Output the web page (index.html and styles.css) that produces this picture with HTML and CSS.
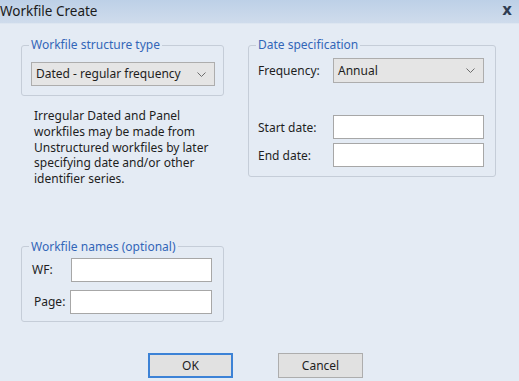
FILE: index.html
```html
<!DOCTYPE html>
<html lang="en">
<head>
    <meta charset="UTF-8">
    <title>Workfile Create</title>
    <link rel="stylesheet" href="styles.css">
</head>
<body>
    <div class="titlebar">
        <span class="title">Workfile Create</span>
        <span class="close">x</span>
    </div>

    <div class="dialog">
        <div class="columns">
            <div class="col-left">
                <fieldset class="group group-structure">
                    <legend>Workfile structure type</legend>
                    <div class="select select-structure">
                        <span>Dated - regular frequency</span>
                        <svg class="chev" width="9" height="5" viewBox="0 0 9 5"><path d="M0.5 0.5 L4.5 4.5 L8.5 0.5" fill="none" stroke="#6d6d6d" stroke-width="1"/></svg>
                    </div>
                </fieldset>

                <p class="note">Irregular Dated and Panel workfiles may be made from Unstructured workfiles by later specifying date and/or other identifier series.</p>

                <fieldset class="group group-names">
                    <legend>Workfile names (optional)</legend>
                    <div class="row row-wf">
                        <label>WF:</label>
                        <input type="text" class="field field-wf">
                    </div>
                    <div class="row row-page">
                        <label>Page:</label>
                        <input type="text" class="field field-page">
                    </div>
                </fieldset>
            </div>

            <div class="col-right">
                <fieldset class="group group-date">
                    <legend>Date specification</legend>
                    <div class="row row-freq">
                        <label>Frequency:</label>
                        <div class="select select-freq">
                            <span>Annual</span>
                            <svg class="chev" width="9" height="5" viewBox="0 0 9 5"><path d="M0.5 0.5 L4.5 4.5 L8.5 0.5" fill="none" stroke="#6d6d6d" stroke-width="1"/></svg>
                        </div>
                    </div>
                    <div class="row row-start">
                        <label>Start date:</label>
                        <input type="text" class="field field-date">
                    </div>
                    <div class="row row-end">
                        <label>End date:</label>
                        <input type="text" class="field field-date">
                    </div>
                </fieldset>
            </div>
        </div>

        <div class="buttons">
            <button class="btn btn-default">OK</button>
            <button class="btn">Cancel</button>
        </div>
    </div>
</body>
</html>
```

FILE: styles.css
```css
* {
    margin: 0;
    padding: 0;
    box-sizing: border-box;
}

body {
    font-family: 'Noto Sans', 'Open Sans', sans-serif;
    font-size: 12px;
    color: #1e1e1e;
    background: #e4ebf4;
    width: 519px;
    height: 381px;
    overflow: hidden;
}

/* Window title */
.titlebar {
    height: 24px;
    display: flex;
    align-items: center;
    justify-content: space-between;
    background: linear-gradient(180deg, #bdd0e7 0%, #cfdcec 100%);
    border-bottom: 1px solid #dde6f1;
    padding-right: 7px;
}

.title {
    font-size: 13.5px;
    color: #1b1b1b;
    margin-top: -2px;
}

.close {
    font-family: 'DejaVu Sans', sans-serif;
    font-weight: 700;
    font-size: 15px;
    color: #2f3d52;
    margin-top: -4px;
}

.dialog {
    padding: 13px 0 0 21px;
}

.columns {
    display: flex;
    gap: 24px;
}

.col-left {
    width: 203px;
}

.col-right {
    width: 248px;
}

/* Group boxes */
.group {
    border: 1px solid #c5cdd8;
    border-radius: 3px;
    padding: 0;
}

.group legend {
    margin-left: 7px;
    padding: 0 2px;
    color: #3366b8;
    line-height: 16px;
}

.group-structure {
    padding: 9px 0;
}

.select {
    height: 24px;
    background: #e5e5e5;
    border: 1px solid #adadad;
    display: flex;
    align-items: center;
    justify-content: space-between;
    padding: 0 8px 0 4px;
}

.select span {
    margin-top: -1px;
}

.select-structure {
    width: 184px;
    margin-left: 9px;
}

.chev {
    display: block;
}

.note {
    margin-top: 12px;
    padding-left: 13px;
    line-height: 15.8px;
    width: 200px;
}

.group-names {
    margin-top: 52px;
    padding: 3px 0 7px 0;
}

.row {
    display: flex;
    align-items: center;
}

.field {
    height: 24px;
    border: 1px solid #a7a7a7;
    background: #fff;
    font: inherit;
}

.row-wf {
    padding-left: 10px;
}

.row-wf label {
    width: 39px;
}

.field-wf {
    width: 141px;
}

.row-page {
    margin-top: 8px;
    padding-left: 12px;
}

.row-page label {
    width: 36px;
}

.field-page {
    width: 142px;
}

.group-date {
    padding: 5px 0 9px 0;
}

.group-date .row {
    padding-left: 9px;
}

.group-date label {
    width: 75px;
}

.select-freq {
    width: 151px;
    height: 25px;
}

.row-start {
    margin-top: 32px;
}

.row-end {
    margin-top: 4px;
}

.field-date {
    width: 151px;
}

/* Dialog buttons */
.buttons {
    display: flex;
    gap: 45px;
    margin-top: 31px;
    padding-left: 127px;
}

.btn {
    width: 85px;
    height: 25px;
    background: #e1e1e1;
    border: 1px solid #adadad;
    font: inherit;
    color: #1e1e1e;
}

.btn-default {
    border: 2px solid #3c82d6;
}
```
